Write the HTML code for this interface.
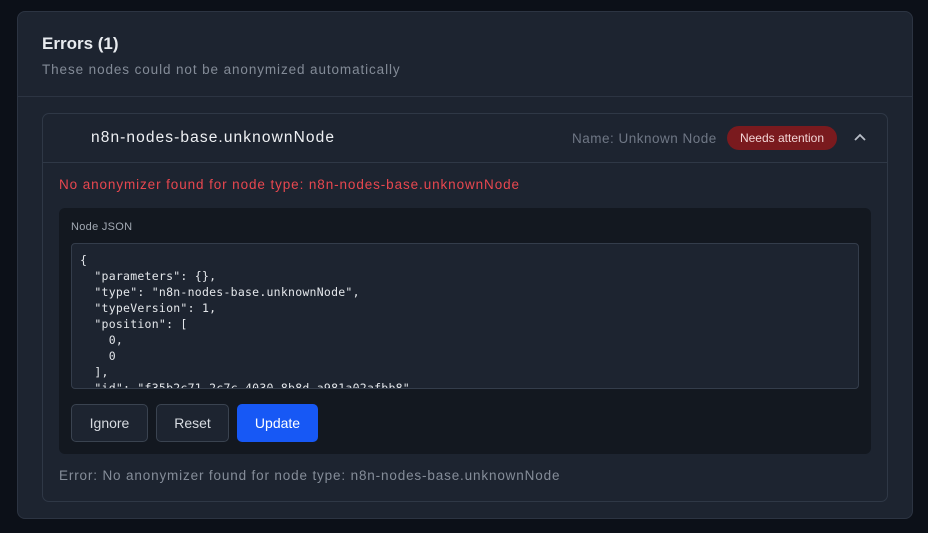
<!DOCTYPE html>
<html><head><style>
*{box-sizing:border-box;margin:0;padding:0}
body{width:928px;height:533px;background:#0c1018;font-family:"Liberation Sans",sans-serif;position:relative;overflow:hidden}
.abs{position:absolute}
.card{left:17px;top:11px;width:896px;height:508px;background:#1d2430;border:1px solid #2c3442;border-radius:8px}
.sep{left:0;top:84px;width:894px;height:1px;background:#2c3442}
.inner{left:24px;top:101px;width:846px;height:389px;border:1px solid #2f3846;border-radius:7px;background:#1d2430}
.json{left:16px;top:94px;width:812px;height:246px;background:#131820;border-radius:6px}
.ta{left:12px;top:35px;width:788px;height:146px;border:1px solid #343d4b;border-radius:4px;background:#1d2430;overflow:hidden;font-family:"DejaVu Sans Mono",monospace;font-size:11.5px;letter-spacing:0.25px;line-height:16px;color:#e3e6ea;padding:8px 0 0 8px;white-space:pre}
.btn{top:196px;height:38px;border-radius:5px;font-size:14px;display:flex;align-items:center;justify-content:center;color:#d7dbe1;border:1px solid #3a4350;background:#1d2430}
</style></head><body>
<div class="abs card">
  <div class="abs" style="left:24px;top:22px;font-size:17px;font-weight:bold;color:#e8ebef">Errors (1)</div>
  <div class="abs" style="left:24px;top:50px;font-size:13.5px;letter-spacing:0.9px;color:#838b97">These nodes could not be anonymized automatically</div>
  <div class="abs sep"></div>
  <div class="abs inner">
    <div class="abs" style="left:48px;top:15px;font-size:15.5px;letter-spacing:1.1px;color:#eef0f3">n8n-nodes-base.unknownNode</div>
    <div class="abs" style="left:529px;top:17px;font-size:13.5px;letter-spacing:0.5px;color:#6f7785">Name: Unknown Node</div>
    <div class="abs" style="left:684px;top:12px;width:110px;height:24px;border-radius:12px;background:#7a1a1e;color:#f3d6d6;font-size:12px;display:flex;align-items:center;justify-content:center">Needs attention</div>
    <svg class="abs" style="left:810px;top:18px" width="14" height="10" viewBox="0 0 14 10"><path d="M2 8 L7 3 L12 8" fill="none" stroke="#b8bec7" stroke-width="1.8"/></svg>
    <div class="abs" style="left:0;top:48px;width:844px;height:1px;background:#2f3846"></div>
    <div class="abs" style="left:16px;top:63px;font-size:13.5px;letter-spacing:0.9px;color:#e8474f">No anonymizer found for node type: n8n-nodes-base.unknownNode</div>
    <div class="abs json">
      <div class="abs" style="left:12px;top:13px;font-size:11px;letter-spacing:0.3px;color:#a2a9b3">Node JSON</div>
      <div class="abs ta">{
  "parameters": {},
  "type": "n8n-nodes-base.unknownNode",
  "typeVersion": 1,
  "position": [
    0,
    0
  ],
  "id": "f35b2c71-2c7c-4030-8b8d-a981a02afbb8"</div>
      <div class="abs btn" style="left:12px;width:77px">Ignore</div>
      <div class="abs btn" style="left:97px;width:73px">Reset</div>
      <div class="abs btn" style="left:178px;width:81px;background:#1758f5;border-color:#1758f5;color:#fff">Update</div>
    </div>
    <div class="abs" style="left:16px;top:354px;font-size:13.5px;letter-spacing:0.85px;color:#858d99">Error: No anonymizer found for node type: n8n-nodes-base.unknownNode</div>
  </div>
</div>
</body></html>
